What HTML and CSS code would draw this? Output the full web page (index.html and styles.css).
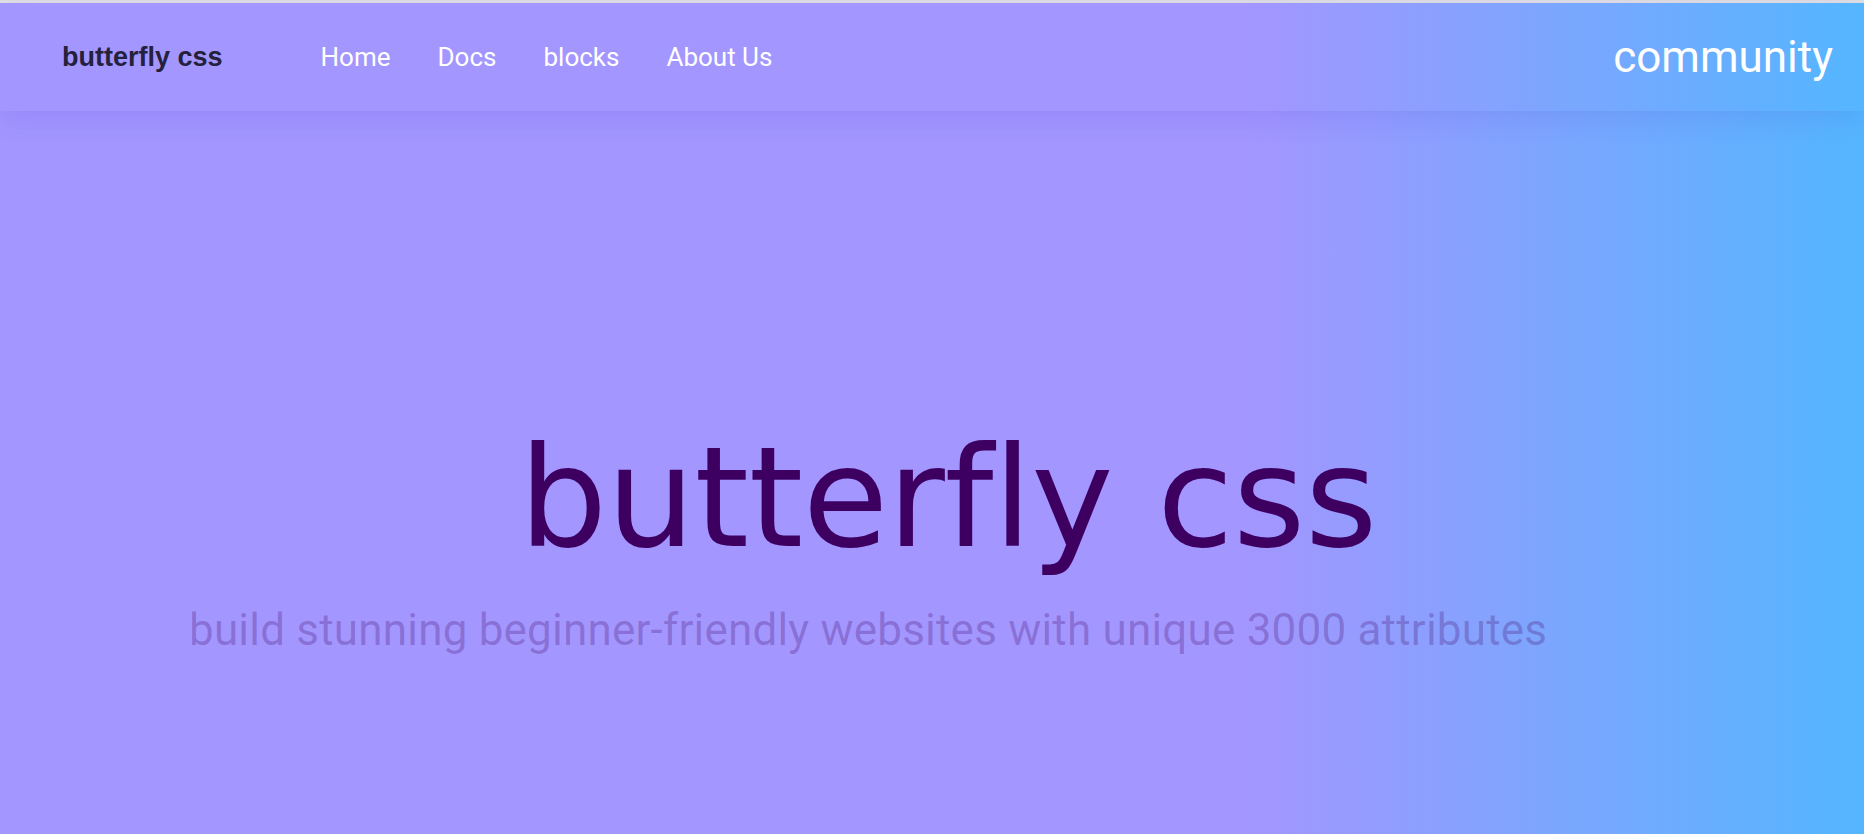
FILE: index.html
```html
<!DOCTYPE html>
<html lang="en">
<head>
<meta charset="utf-8">
<title>butterfly css</title>
<link rel="stylesheet" href="styles.css">
</head>
<body>
<div class="topline"></div>
<header class="navbar">
  <a class="logo" href="#">butterfly css</a>
  <nav class="links">
    <a href="#">Home</a>
    <a href="#">Docs</a>
    <a href="#">blocks</a>
    <a href="#">About Us</a>
  </nav>
  <a class="community" href="#">community</a>
</header>
<main class="hero">
  <h1 class="hero-title">butterfly css</h1>
  <p class="hero-sub">build stunning beginner-friendly websites with unique 3000 attributes</p>
</main>
</body>
</html>
```
FILE: styles.css
```css
html, body {
  margin: 0;
  padding: 0;
}
body {
  width: 1864px;
  height: 834px;
  overflow: hidden;
  background: linear-gradient(90deg, #a396fe 0%, #a396fe 67%, #54b6fe 100%);
  font-family: Roboto, "Liberation Sans", sans-serif;
  display: flex;
  flex-direction: column;
}
a {
  text-decoration: none;
}
.topline {
  height: 3px;
  background: #e1e1e4;
  flex: none;
}
.navbar {
  height: 108px;
  flex: none;
  display: flex;
  align-items: center;
  padding: 0 31px 0 62px;
  box-shadow: 0 6px 28px rgba(70, 50, 210, 0.14);
  position: relative;
  z-index: 1;
}
.logo {
  font-family: "Liberation Sans", Arial, sans-serif;
  font-weight: 700;
  font-size: 27px;
  color: #24213c;
}
.links {
  display: flex;
  gap: 47px;
  margin-left: 98px;
}
.links a {
  color: #ffffff;
  font-size: 26px;
}
.community {
  margin-left: auto;
  color: #ffffff;
  font-size: 44px;
}
.hero {
  flex: 1;
  display: flex;
  flex-direction: column;
  align-items: flex-start;
  padding-top: 318px;
}
.hero-title {
  margin: 0 0 0 519px;
  font-family: "DejaVu Sans", Verdana, sans-serif;
  font-weight: 400;
  font-size: 139px;
  line-height: 139px;
  letter-spacing: -0.4px;
  font-variant-ligatures: none;
  font-feature-settings: "liga" 0;
  color: #3d0061;
  white-space: nowrap;
}
.hero-sub {
  margin: 40px 0 0 189px;
  font-size: 44px;
  line-height: 44px;
  letter-spacing: 0.2px;
  color: rgba(61, 0, 97, 0.26);
  white-space: nowrap;
}
```
